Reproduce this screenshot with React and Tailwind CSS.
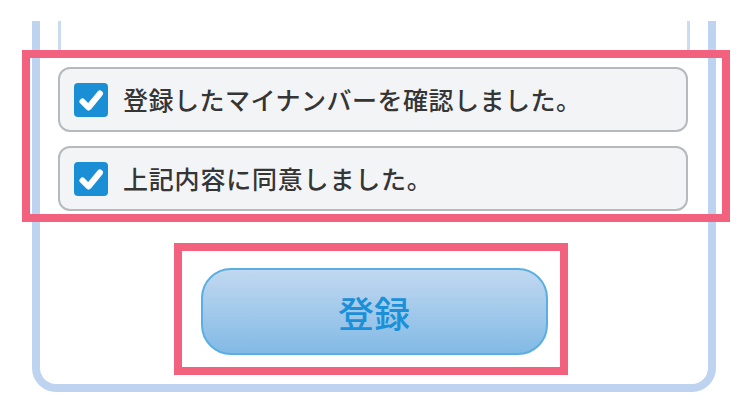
import React from "react";

function Check() {
  return (
    <div className="w-[34px] h-[34px] rounded-[4px] bg-[#1a8fd6] flex items-center justify-center shrink-0">
      <svg width="34" height="34" viewBox="0 0 34 34">
        <polyline points="8.5,18.5 14.5,24.5 26,10.5" fill="none" stroke="#fff" strokeWidth="6" strokeLinecap="round" strokeLinejoin="round" />
      </svg>
    </div>
  );
}

function Row({ children, track }) {
  return (
    <div className="h-[65px] ml-[18px] w-[630px] rounded-[12px] border-2 border-[#b6b9bd] bg-[#f3f4f6] flex items-center pl-[14px] gap-[15px]">
      <Check />
      <span className={"text-[25px] font-medium text-[#353535] leading-none " + track}>{children}</span>
    </div>
  );
}

export default function App() {
  return (
    <div
      className="relative w-[750px] h-[414px] bg-white overflow-hidden"
      style={{ fontFamily: '"Noto Sans CJK JP", "Noto Sans", sans-serif' }}
    >
      <div className="h-[21px]" />
      <div className="ml-[32px] w-[684px] border-x-8 border-b-8 border-[#bdd3ef] rounded-b-[24px] flex flex-col">
        <div className="h-[36px] mx-[18px] border-x-[3px] border-[#c9dcf2]" />
        <div className="mt-[10px] flex flex-col gap-[14px]">
          <Row track="tracking-[0.5px]">登録したマイナンバーを確認しました。</Row>
          <Row track="tracking-[0.8px]">上記内容に同意しました。</Row>
        </div>
        <div className="mt-[57px] mb-[29px] mx-auto w-[347px] h-[87px] rounded-[30px] border-2 border-[#5aaee2] bg-gradient-to-b from-[#c1d8f0] to-[#82bae5] flex items-center justify-center">
          <span className="text-[36px] font-medium text-[#1b8fd7] leading-none">登録</span>
        </div>
      </div>
      <div className="absolute left-[22px] top-[50px] w-[708px] h-[172px] border-[8px] border-[#f2627f] pointer-events-none" />
      <div className="absolute left-[174px] top-[243px] w-[394px] h-[132px] border-[8px] border-[#f2627f] pointer-events-none" />
    </div>
  );
}
